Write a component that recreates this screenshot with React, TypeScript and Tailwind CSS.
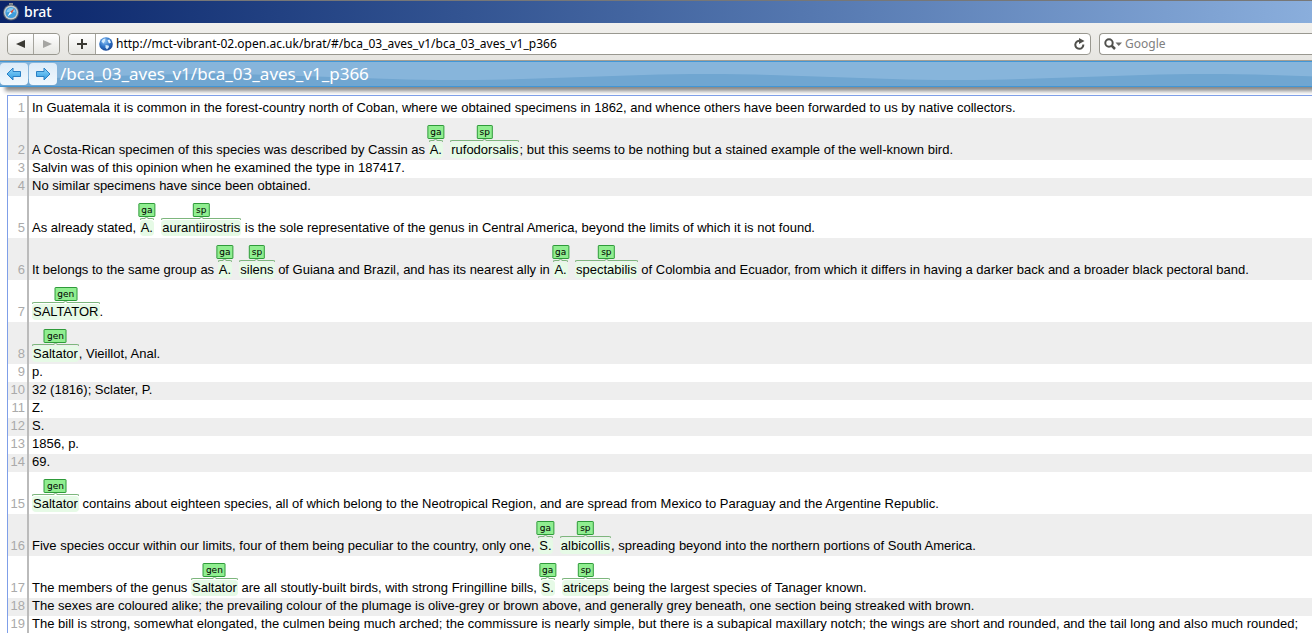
import React from "react";

type Part = string | [label: string, text: string];

const sentences: Part[][] = [
  ["In Guatemala it is common in the forest-country north of Coban, where we obtained specimens in 1862, and whence others have been forwarded to us by native collectors."],
  ["A Costa-Rican specimen of this species was described by Cassin as ", ["ga", "A."], "  ", ["sp", "rufodorsalis"], "; but this seems to be nothing but a stained example of the well-known bird."],
  ["Salvin was of this opinion when he examined the type in 187417."],
  ["No similar specimens have since been obtained."],
  ["As already stated, ", ["ga", "A."], "  ", ["sp", "aurantiirostris"], " is the sole representative of the genus in Central America, beyond the limits of which it is not found."],
  ["It belongs to the same group as ", ["ga", "A."], "  ", ["sp", "silens"], " of Guiana and Brazil, and has its nearest ally in ", ["ga", "A."], "  ", ["sp", "spectabilis"], " of Colombia and Ecuador, from which it differs in having a darker back and a broader black pectoral band."],
  [["gen", "SALTATOR"], "."],
  [["gen", "Saltator"], ", Vieillot, Anal."],
  ["p."],
  ["32 (1816); Sclater, P."],
  ["Z."],
  ["S."],
  ["1856, p."],
  ["69."],
  [["gen", "Saltator"], " contains about eighteen species, all of which belong to the Neotropical Region, and are spread from Mexico to Paraguay and the Argentine Republic."],
  ["Five species occur within our limits, four of them being peculiar to the country, only one, ", ["ga", "S."], "  ", ["sp", "albicollis"], ", spreading beyond into the northern portions of South America."],
  ["The members of the genus ", ["gen", "Saltator"], " are all stoutly-built birds, with strong Fringilline bills, ", ["ga", "S."], "  ", ["sp", "atriceps"], " being the largest species of Tanager known."],
  ["The sexes are coloured alike; the prevailing colour of the plumage is olive-grey or brown above, and generally grey beneath, one section being streaked with brown."],
  ["The bill is strong, somewhat elongated, the culmen being much arched; the commissure is nearly simple, but there is a subapical maxillary notch; the wings are short and rounded, and the tail long and also much rounded;"],
];

function Brace() {
  return (
    <span className="absolute inset-x-0 -top-1 flex h-1.5 text-[#7db67d]">
      <span className="mt-0.5 h-0.5 flex-1 rounded-tl-xs border-t border-l border-current" />
      <svg className="-mx-px h-[3px] w-[5px]" viewBox="0 0 5 3" fill="none" stroke="currentColor">
        <path d="M0 2.5 Q2.5 2.5 2.5 0 Q2.5 2.5 5 2.5" />
      </svg>
      <span className="mt-0.5 h-0.5 flex-1 rounded-tr-xs border-t border-r border-current" />
    </span>
  );
}

function Annotation({ label, text }: { label: string; text: string }) {
  return (
    <mark className="relative inline-block h-4 rounded-sm bg-[#e6fae6] px-px leading-4 text-black">
      <Brace />
      <span className="absolute -top-[17px] left-1/2 flex h-[14px] -translate-x-1/2 items-center rounded-[1px] border border-[#2f9a3a] bg-[#90ee90] px-0.5 font-['DejaVu_Sans'] text-[9px] leading-none">
        {label}
      </span>
      {text}
    </mark>
  );
}

function Sentence({ parts, number }: { parts: Part[]; number: number }) {
  const annotated = parts.some((p) => typeof p !== "string");
  return (
    <li className="group flex leading-4 odd:bg-white even:bg-[#eee]">
      <span className="flex w-[21px] shrink-0 items-end justify-end border-r-2 border-[#bbb] pr-0.5 pb-0.5 text-[#aaa]">{number}</span>
      <p className={annotated ? "pt-6 pb-0.5 pl-[3px] whitespace-pre" : "pb-0.5 pl-[3px] whitespace-pre group-first:pt-1"}>
        {parts.map((p, i) => (typeof p === "string" ? p : <Annotation key={i} label={p[0]} text={p[1]} />))}
      </p>
    </li>
  );
}

function CompassIcon() {
  return (
    <svg className="size-[18px]" viewBox="0 0 18 18">
      <path d="M7 0h4v3H7z" fill="#8c8f93" />
      <circle cx="9" cy="9.5" r="8" fill="#56616d" />
      <circle cx="9" cy="9.5" r="7" fill="#c5ccd3" />
      <circle cx="9" cy="9.5" r="5.6" fill="#3e9ddb" />
      <path d="M4.5 9.5a4.5 4.5 0 0 1 9 0q-4.500-1.500-9 0z" fill="#86c8f0" />
      <path d="M12.500 5.500L9.900 10.300 8.100 8.700z" fill="#e2482d" />
      <path d="M5.500 13.500L8.100 8.700 9.900 10.300z" fill="#fff" />
    </svg>
  );
}

function GlobeIcon() {
  return (
    <svg className="size-[14px] shrink-0" viewBox="0 0 14 14">
      <defs>
        <radialGradient id="globe" cx=".4" cy=".3" r=".8">
          <stop offset="0" stopColor="#8fc4f5" />
          <stop offset=".5" stopColor="#2f74c8" />
          <stop offset="1" stopColor="#123a86" />
        </radialGradient>
      </defs>
      <circle cx="7" cy="7" r="6.800" fill="url(#globe)" />
      <path d="M2.500 4.500Q3.500 1.500 6.500 1.500L6 4 4.500 6.500z" fill="#d5ebfd" />
      <path d="M8.500 3l2-.5 1.500 3-2 1z" fill="#e4f3ff" />
      <path d="M6.500 8l3 .5.5 1.500-2 2.500-1.500-2z" fill="#d5ebfd" />
    </svg>
  );
}

function ArrowIcon({ flip = false }: { flip?: boolean }) {
  return (
    <svg className={flip ? "h-3.5 w-4 rotate-180" : "h-3.5 w-4"} viewBox="0 0 16 14">
      <defs>
        <linearGradient id={flip ? "arrowR" : "arrowL"} x1="0" y1={flip ? "1" : "0"} x2="0" y2={flip ? "0" : "1"}>
          <stop offset="0" stopColor="#8ed6fb" />
          <stop offset="1" stopColor="#2f9ae0" />
        </linearGradient>
      </defs>
      <path d="M1 7L7 1V4.500H14.500V9.500H7V13z" fill={flip ? "url(#arrowR)" : "url(#arrowL)"} stroke="#2a7fc4" strokeLinejoin="round" />
    </svg>
  );
}

function TitleBar() {
  return (
    <div className="flex h-[23px] items-center gap-1 border-t border-[#777] bg-linear-to-r from-[#0a246a] to-[#8aaedc] pl-0.5 text-white">
      <CompassIcon />
      <h1 className="font-['Noto_Sans'] text-sm leading-5 font-medium">brat</h1>
    </div>
  );
}

function Toolbar() {
  const face = "flex h-5 items-center justify-center bg-linear-to-b from-white to-[#e6e6e2]";
  return (
    <div className="flex h-[38px] items-center border-b border-[#a39e93] bg-linear-to-b from-[#f1f0ed] to-[#e6e5e1] pt-1 pl-[7px]">
      <div className="flex rounded border border-[#999890]">
        <button aria-label="Back" className={face + " w-[26px] rounded-l border-r border-[#a5a49d]"}>
          <svg className="h-2 w-2.5" viewBox="0 0 10 8"><path d="M0 4L9 0V8z" fill="#3b3a34" /></svg>
        </button>
        <button aria-label="Forward" className={face + " w-[25px] rounded-r"}>
          <svg className="h-2 w-2.5" viewBox="0 0 10 8"><path d="M10 4L1 0V8z" fill="#a5a5a2" /></svg>
        </button>
      </div>
      <div className="ml-2 flex min-w-0 flex-1 rounded border border-[#999890] bg-white">
        <button aria-label="Add bookmark" className={face + " w-[27px] shrink-0 rounded-l border-r border-[#a5a49d]"}>
          <svg className="size-3" viewBox="0 0 12 12"><path d="M6 1V11M1 6H11" stroke="#3b3a34" strokeWidth="2" /></svg>
        </button>
        <label className="flex min-w-0 flex-1 items-center gap-[3px] pl-[3px]">
          <GlobeIcon />
          <input
            aria-label="Address"
            className="min-w-0 flex-1 bg-transparent font-['Noto_Sans'] text-xs leading-5 text-black outline-none"
            defaultValue="http://mct-vibrant-02.open.ac.uk/brat/#/bca_03_aves_v1/bca_03_aves_v1_p366"
          />
        </label>
        <button aria-label="Reload" className="flex w-[22px] items-center justify-center">
          <svg className="h-3 w-[11px]" viewBox="0 0 11 12" fill="none">
            <path d="M9.300 6.500A4 4 0 1 1 6.500 3" stroke="#50504c" strokeWidth="2" />
            <path d="M5 0L10.500 3 5 6z" fill="#50504c" />
          </svg>
        </button>
      </div>
      <label className="ml-2 flex w-[213px] shrink-0 items-center gap-[3px] rounded-l border border-r-0 border-[#999890] bg-white pl-1">
        <svg className="h-3 w-[18px] shrink-0" viewBox="0 0 18 12" fill="none">
          <circle cx="5" cy="5" r="3.700" stroke="#50504c" strokeWidth="2" />
          <path d="M7.500 7.500L11 11" stroke="#50504c" strokeWidth="2.500" />
          <path d="M11.500 4.500H18L14.750 8z" fill="#6b6b68" />
        </svg>
        <input type="search" aria-label="Search" placeholder="Google" className="h-5 min-w-0 flex-1 bg-transparent font-['Noto_Sans'] text-xs leading-5 outline-none placeholder:text-[#808080]" />
      </label>
    </div>
  );
}

function DocumentHeader() {
  const button = "flex h-[22px] w-7 items-center justify-center rounded bg-linear-to-b from-[#dcebf8] to-[#f1f8fe]";
  return (
    <header className="relative flex h-[26px] items-center gap-px border-y border-[#4297d7] bg-[#87b5db] shadow-[5px_4px_4px_#888]">
      <svg className="absolute inset-0 h-full w-full" aria-hidden="true">
        <defs>
          <pattern id="wave" width="500" height="24" patternUnits="userSpaceOnUse" x="-43">
            <path d="M0 18C90 18 160 12 250 12S410 18 500 18V24H0z" fill="#70a6d1" />
          </pattern>
        </defs>
        <rect width="100%" height="100%" fill="url(#wave)" />
      </svg>
      <nav className="relative flex gap-px">
        <button aria-label="Previous document" className={button}><ArrowIcon /></button>
        <button aria-label="Next document" className={button}><ArrowIcon flip /></button>
      </nav>
      <h2 className="relative pl-0.5 font-['Noto_Sans'] text-[17px] leading-6 text-white">/bca_03_aves_v1/bca_03_aves_v1_p366</h2>
    </header>
  );
}

export default function App() {
  return (
    <div className="h-screen overflow-hidden bg-white font-['Liberation_Sans',sans-serif] text-[13px] text-black">
      <TitleBar />
      <Toolbar />
      <DocumentHeader />
      <main className="relative mt-2 ml-[7px] border-t border-l border-[#7f9fe8] bg-white">
        <ol>
          {sentences.map((parts, i) => (
            <Sentence key={i} parts={parts} number={i + 1} />
          ))}
        </ol>
      </main>
    </div>
  );
}
